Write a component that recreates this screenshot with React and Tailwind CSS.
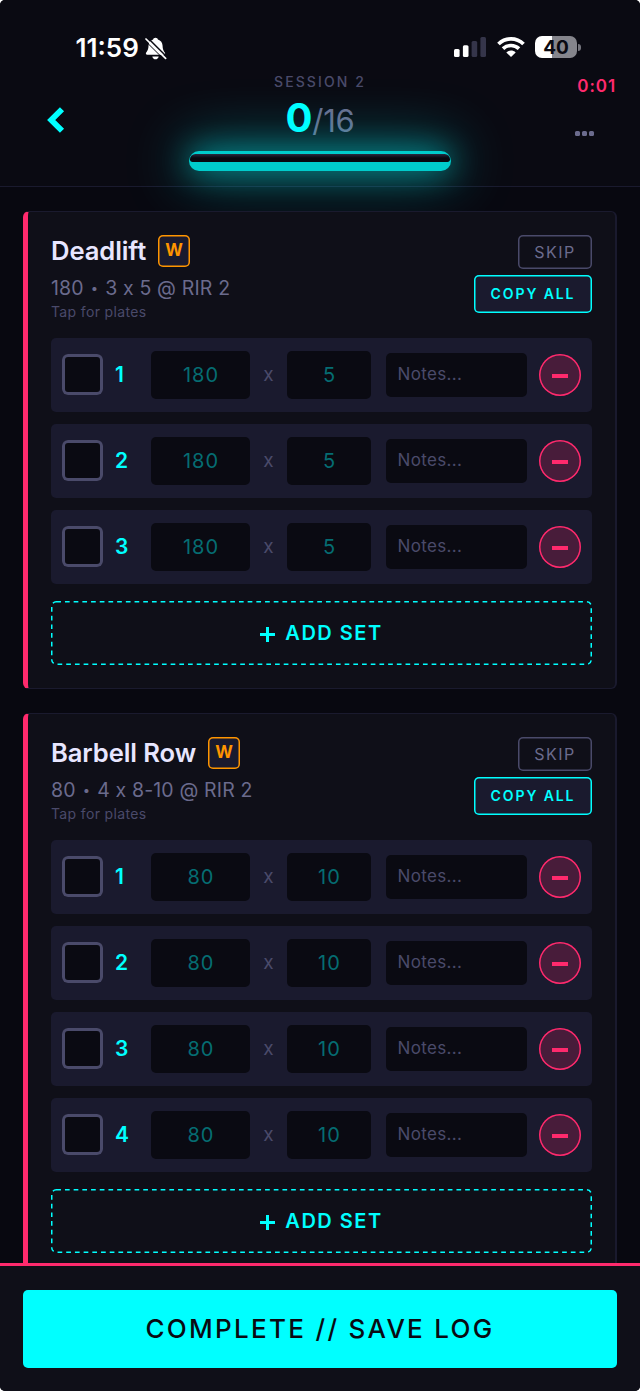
import React from "react";

const exercises = [
  { name: "Deadlift", load: 180, scheme: "3 x 5 @ RIR 2", reps: 5, sets: 3 },
  { name: "Barbell Row", load: 80, scheme: "4 x 8-10 @ RIR 2", reps: 10, sets: 4 },
];

function BellOffIcon() {
  return (
    <svg width="22" height="23" viewBox="0 0 22 23" fill="none">
      <path
        d="M10.500 .8c1.300 0 2.200.8 2.400 1.700 2.900.9 4.600 3.300 4.700 6.200 .1 4 1.200 5.300 2.200 6.700.7 1 .3 2.300-1.100 2.300H2.300c-1.400 0-1.800-1.300-1.100-2.300 1-1.400 2.200-2.700 2.300-6.700.1-2.900 1.700-5.300 4.600-6.200C8.300 1.600 9.200.8 10.500.8Z"
        fill="#fff"
      />
      <path d="M7.300 19.500h6.400c-.4 1.900-1.600 2.800-3.200 2.800s-2.800-.9-3.200-2.800Z" fill="#fff" />
      <path d="M2.600 .8 22 20" stroke="#0a0a12" strokeWidth="1.500" />
      <path d="M0 3.600 18.800 22.200" stroke="#0a0a12" strokeWidth="1" />
      <path d="M1 2 20.600 21.400" stroke="#fff" strokeWidth="1.700" strokeLinecap="round" />
    </svg>
  );
}

function SignalIcon() {
  return (
    <svg width="32" height="20" viewBox="0 0 32 20">
      <rect x="0" y="12" width="5.600" height="8" rx="1.500" fill="#fff" />
      <rect x="8.900" y="8.300" width="5.600" height="11.700" rx="1.500" fill="#fff" />
      <rect x="17.600" y="4" width="5.600" height="16" rx="1.500" fill="#35354a" />
      <rect x="26.400" y="0" width="5.600" height="20" rx="1.500" fill="#35354a" />
    </svg>
  );
}

function WifiIcon() {
  return (
    <svg width="28" height="20" viewBox="0 0 28 20" fill="none">
      <path d="M1.500 7C8.500 .2 19.500 .2 26.500 7" stroke="#fff" strokeWidth="3.800" />
      <path d="M6 11.700c4.600-4.300 11.400-4.300 16 0" stroke="#fff" strokeWidth="3.700" />
      <path d="M9.300 15.400c2.800-2.600 6.600-2.600 9.400 0L14 20Z" fill="#fff" />
    </svg>
  );
}

function StatusBar() {
  return (
    <div className="flex h-[72px] items-start justify-between pr-[59px] pl-[75.5px] pt-[36px]">
      <div className="flex items-center gap-[6px]">
        <span className="text-[26px] leading-6 font-semibold text-white">11:59</span>
        <BellOffIcon />
      </div>
      <div className="flex items-center">
        <SignalIcon />
        <div className="ml-[11px]">
          <WifiIcon />
        </div>
        <div className="ml-[10px] flex h-[22px] w-[42px] items-center justify-center rounded-[7px] bg-linear-to-r from-white from-40% to-[#85858c] to-40% pt-[2px] text-[19px] leading-5 font-bold text-[#0a0a12]">
          40
        </div>
        <div className="ml-[1px] h-[7px] w-[3px] rounded-r-full bg-[#75757d]" />
      </div>
    </div>
  );
}

function Header() {
  return (
    <header className="h-[187px] shrink-0 border-b-1 border-[#1a1a2e] bg-[#0a0a12]">
      <StatusBar />
      <div className="flex justify-between">
        <button className="mt-[34px] ml-[46px] h-[28px] w-[143px]">
          <svg width="19" height="28" viewBox="0 0 19 28" fill="none">
            <path d="M16 3.200 5.200 14 16 24.800" stroke="#00ffff" strokeWidth="5.800" />
          </svg>
        </button>
        <div className="flex w-[262px] flex-col items-center">
          <p className="mt-[2px] text-[14px] leading-4 font-medium tracking-[2.1px] text-[#4a4a6a]">SESSION 2</p>
          <p className="mt-[6px] flex items-baseline text-[31px] leading-[44px] tracking-[-0.2px] text-[#6b6b8d]">
            <span className="text-[40px] font-bold text-[#00ffff]">0</span>/16
          </p>
          <div className="mt-[8px] h-[20px] w-full rounded-[10px] bg-[#00cccc] px-[1px] pt-[3px] shadow-[0_0_30px_rgba(0,255,255,0.5),0_0_60px_6px_rgba(0,255,255,0.4)]">
            <div className="h-[8px] rounded-t-[6px] rounded-b-[3px] bg-linear-to-b from-[#2a2a40] to-[#08080f] to-50%" />
          </div>
        </div>
        <div className="flex w-[189px] flex-col items-end pr-[24px]">
          <span className="mt-[2px] text-[17px] leading-6 font-semibold tracking-[0.9px] text-[#ff2a6d]">0:01</span>
          <div className="mt-[33px] mr-[22px] flex gap-[2px]">
            <i className="size-[5px] rounded-[1.5px] bg-[#6b6b8d]" />
            <i className="size-[5px] rounded-[1.5px] bg-[#6b6b8d]" />
            <i className="size-[5px] rounded-[1.5px] bg-[#6b6b8d]" />
          </div>
        </div>
      </div>
    </header>
  );
}

function SetRow({ number, load, reps }) {
  return (
    <div className="flex h-[74px] items-center rounded-[5px] bg-[#1a1a2e] pl-[11px]">
      <div className="size-[41px] shrink-0 rounded-[6px] bg-[#0a0a12] inset-ring-[3px] inset-ring-[#4a4a6a]" />
      <span className="ml-[12px] w-[36px] text-[21px] font-semibold text-[#00ffff]">{number}</span>
      <div className="flex h-[48px] w-[99px] items-center justify-center rounded-[5px] bg-[#0a0a12] pl-[1px] text-[20px] tracking-[1px] text-[#056d72]">
        {load}
      </div>
      <span className="w-[37px] pt-[1px] text-center text-[19px] text-[#4a4a6a]">x</span>
      <div className="flex h-[48px] w-[84px] items-center justify-center rounded-[5px] bg-[#0a0a12] pl-[1px] text-[20px] tracking-[1px] text-[#056d72]">
        {reps}
      </div>
      <div className="ml-[15px] flex h-[44px] w-[141px] items-center rounded-[5px] bg-[#0a0a12] pt-[1px] pl-[11.5px] text-[17px] tracking-[0.35px] text-[#4a4a6a]">
        Notes...
      </div>
      <button className="ml-[12px] flex size-[42px] items-center justify-center rounded-full bg-[#481c3a] inset-ring-[1.5px] inset-ring-[#ff2a6d]">
        <span className="mt-[2px] h-[4px] w-[16px] bg-[#ff2a6d]" />
      </button>
    </div>
  );
}

function ExerciseCard({ name, load, scheme, reps, sets }) {
  return (
    <section className="shrink-0 rounded-[6px] border-y-1 border-r-2 border-l-5 border-[#1a1a2e] border-l-[#ff2a6d] bg-[#0f0f18] px-[23px] py-[23px]">
      <div className="flex h-[103px] justify-between">
        <div>
          <div className="flex items-center gap-[12px]">
            <h2 className="text-[25.6px] leading-8 font-semibold tracking-[-0.1px] text-[#e8e6ff]">{name}</h2>
            <span className="flex size-[32px] items-center justify-center rounded-[5px] bg-[#1a1a2e] pt-[1px] text-[17px] font-bold text-[#ff9500] inset-ring-[1.5px] inset-ring-[#ff9500]">
              W
            </span>
          </div>
          <p className="mt-[7px] flex items-center gap-[7px] text-[19.5px] leading-7 tracking-[0.15px] text-[#6b6b8d]">
            {load} <span className="text-[13px]">•</span> {scheme}
          </p>
          <p className="text-[14px] leading-5 tracking-[0.35px] text-[#4a4a6a]">Tap for plates</p>
        </div>
        <div className="flex flex-col items-end gap-[6px]">
          <button className="h-[34px] w-[74px] rounded-[5px] text-[16px] tracking-[1.500px] text-[#6b6b8d] inset-ring-[1.5px] inset-ring-[#4a4a6a]">
            SKIP
          </button>
          <button className="h-[38px] w-[118px] rounded-[5px] bg-[#1a1a2e] text-[14px] font-semibold tracking-[1.900px] text-[#00ffff] inset-ring-[1.5px] inset-ring-[#00ffff]">
            COPY ALL
          </button>
        </div>
      </div>
      <div className="flex flex-col gap-[12px]">
        {Array.from({ length: sets }, (_, i) => (
          <SetRow key={i} number={i + 1} load={load} reps={reps} />
        ))}
      </div>
      <button className="relative mt-[17.5px] flex h-[64px] w-full items-center justify-center text-[20px] font-semibold tracking-[1.500px] text-[#00ffff]">
        <svg className="absolute inset-0 size-full" fill="none">
          <rect
            className="h-[62.5px] w-[calc(100%-1.5px)]"
            x="0.75"
            y="0.75"
            rx="4.500"
            stroke="#00ffff"
            strokeWidth="1.500"
            strokeDasharray="4.700 4"
          />
        </svg>
        <svg className="mt-[3px] mr-[10px]" width="15" height="15" viewBox="0 0 15 15">
          <path d="M7.500 0v15M0 7.500h15" stroke="#00ffff" strokeWidth="3" />
        </svg>
        ADD SET
      </button>
    </section>
  );
}

export default function App() {
  return (
    <div className="bg-white">
      <div className="flex h-[1391px] w-[640px] flex-col overflow-hidden rounded-[5px] bg-[#080810] font-['Inter','Liberation_Sans',sans-serif]">
        <Header />
        <main className="flex min-h-0 flex-1 flex-col gap-[23.5px] overflow-hidden px-[23px] pt-[23.5px]">
          {exercises.map((exercise) => (
            <ExerciseCard key={exercise.name} {...exercise} />
          ))}
        </main>
        <footer className="h-[128px] shrink-0 border-t-3 border-[#ff2a6d] bg-[#0f0f18] px-[23px] pt-[23.5px]">
          <button className="h-[78px] w-full rounded-[5px] bg-[#00ffff] pb-[1px] text-[26px] font-medium tracking-[2.300px] text-[#0a0a12]">
            COMPLETE // SAVE LOG
          </button>
        </footer>
      </div>
    </div>
  );
}
